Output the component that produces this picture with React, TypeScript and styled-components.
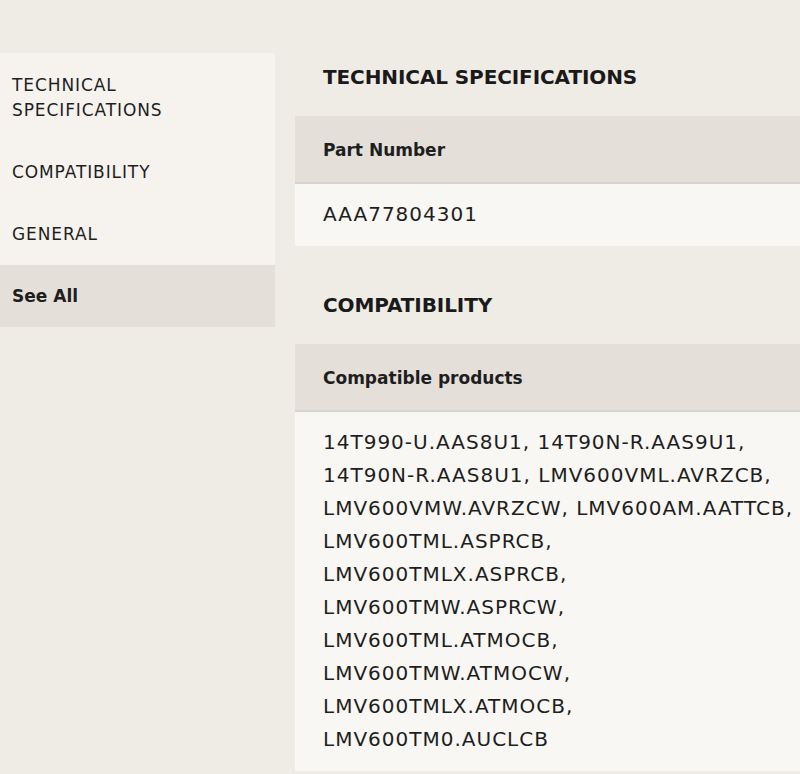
import styled, { createGlobalStyle } from "styled-components";

const GlobalStyle = createGlobalStyle`
    body {
        margin: 0;
        background-color: #efebe5;
        font-family: "DejaVu Sans", "Noto Sans", sans-serif;
        color: #1e1e1e;
        overflow: hidden;
    }
`

const Page = styled.div`
    display: flex;
    align-items: flex-start;
    gap: 20px;
    padding-top: 53px;
    width: 840px;
`

const Sidebar = styled.nav`
    display: flex;
    flex-direction: column;
    width: 275px;
    flex-shrink: 0;
    background-color: #f6f3ee;
`

const NavItem = styled.div<{active?: boolean}>`
    padding: 19.5px 12px 17px;
    font-size: 17px;
    line-height: 25.5px;
    font-weight: ${(props)=>props.active ? 700 : 400};
    letter-spacing: ${(props)=>props.active ? "0" : "0.9px"};
    background-color: ${(props)=>props.active ? "#e4e0d9" : "transparent"};
`

const Main = styled.main`
    flex: 1;
    display: flex;
    flex-direction: column;
`

const Section = styled.section`
    display: flex;
    flex-direction: column;
    & + & {
        margin-top: 35px;
    }
`

const Title = styled.h2`
    margin: 0;
    padding: 12px 28px 27px;
    font-size: 20px;
    line-height: 24px;
    font-weight: 700;
    letter-spacing: -0.1px;
    color: #1a1a1a;
`

const Label = styled.div`
    padding: 22px 28px 20px;
    font-size: 17px;
    line-height: 24px;
    font-weight: 700;
    background-color: #e4e0d9;
    border-bottom: 2px solid #d8d3cb;
`

const Value = styled.div`
    padding: 14px 28px 15px;
    font-size: 20px;
    line-height: 33px;
    letter-spacing: 1px;
    background-color: #f8f7f3;
`

const Line = styled.span`
    display: block;
`

const productLines = [
    "14T990-U.AAS8U1, 14T90N-R.AAS9U1,",
    "14T90N-R.AAS8U1, LMV600VML.AVRZCB,",
    "LMV600VMW.AVRZCW, LMV600AM.AATTCB,",
    "LMV600TML.ASPRCB,",
    "LMV600TMLX.ASPRCB,",
    "LMV600TMW.ASPRCW,",
    "LMV600TML.ATMOCB,",
    "LMV600TMW.ATMOCW,",
    "LMV600TMLX.ATMOCB,",
    "LMV600TM0.AUCLCB",
]

function App() {
    return (
        <>
            <GlobalStyle />
            <Page>
                <Sidebar>
                    <NavItem>TECHNICAL<br />SPECIFICATIONS</NavItem>
                    <NavItem>COMPATIBILITY</NavItem>
                    <NavItem>GENERAL</NavItem>
                    <NavItem active>See All</NavItem>
                </Sidebar>
                <Main>
                    <Section>
                        <Title>TECHNICAL SPECIFICATIONS</Title>
                        <Label>Part Number</Label>
                        <Value>AAA77804301</Value>
                    </Section>
                    <Section>
                        <Title>COMPATIBILITY</Title>
                        <Label>Compatible products</Label>
                        <Value>
                            {productLines.map((line, index)=>(
                                <Line key={index}>{line}</Line>
                            ))}
                        </Value>
                    </Section>
                </Main>
            </Page>
        </>
    )
}
export default App;
